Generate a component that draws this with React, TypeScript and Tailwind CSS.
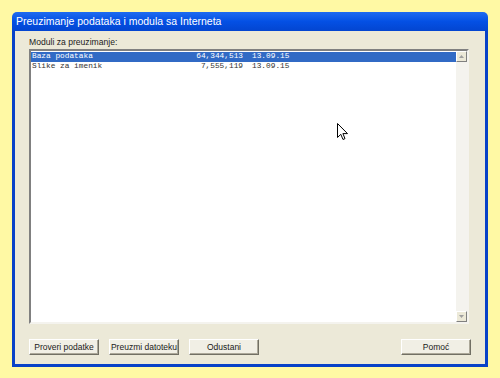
import React from "react";

const rows = [
  { name: "Baza podataka", size: "64,344,513", date: "13.09.15" },
  { name: "Slike za imenik", size: "7,555,119", date: "13.09.15" },
];

const buttons = ["Proveri podatke", "Preuzmi datoteku", "Odustani"];

function XpButton({ label }: { label: string }) {
  return (
    <button
      type="button"
      className="block h-[16px] w-[70px] whitespace-nowrap border border-t-white border-l-white border-b-[#716F64] border-r-[#716F64] bg-[#F1EFE5] p-0 text-[8.5px] leading-[14px] text-[#1a1a1a] shadow-[inset_-1px_-1px_0_#ACA899]"
    >
      {label}
    </button>
  );
}

function ScrollArrow({ up }: { up?: boolean }) {
  return (
    <div className="flex h-[11px] w-[11px] items-center justify-center border border-t-white border-l-white border-b-[#808080] border-r-[#808080] bg-[#ECE9D8]">
      <svg width="5" height="3" viewBox="0 0 5 3">
        <path d={up ? "M0 3 L2.5 0 L5 3 Z" : "M0 0 L2.5 3 L5 0 Z"} fill="#A0A0A0" />
      </svg>
    </div>
  );
}

export default function App() {
  return (
    <div
      className="h-[378px] w-[500px] bg-[#FFF9A4] pl-[12px] pt-[12px]"
      style={{ fontFamily: '"Liberation Sans", Arial, sans-serif' }}
    >
      <div className="flex h-[355px] w-[476px] flex-col">
        <div className="flex h-[19px] items-center rounded-t-[5px] bg-gradient-to-b from-[#1E6BF0] via-[#0450E4] to-[#0345D0] pl-[4px] text-[10.5px] text-white">
          Preuzimanje podataka i modula sa Interneta
        </div>
        <div className="flex flex-1 flex-col border-x-[3px] border-b-[3px] border-[#0842C8] bg-[#ECE9D8] px-[14px] pt-[6px]">
          <div className="text-[8.6px] leading-[11px] text-[#222]">
            Moduli za preuzimanje:
          </div>
          <div className="relative mr-[2px] mt-[1px] flex h-[275px] border-2 border-t-[#808080] border-l-[#808080] border-b-[#F4F3EE] border-r-[#F4F3EE] bg-white">
            <div className="flex-1 pt-[1px]">
              {rows.map((row, i) => (
                <div
                  key={row.name}
                  className={`flex h-[10px] items-center pl-[1px] text-[7.8px] ${
                    i === 0 ? "bg-[#316AC5] text-white" : "text-[#333]"
                  }`}
                  style={{ fontFamily: '"Liberation Mono", "Courier New", monospace' }}
                >
                  <span className="w-[150px]">{row.name}</span>
                  <span className="w-[61px] text-right">{row.size}</span>
                  <span className="ml-[9px]">{row.date}</span>
                </div>
              ))}
            </div>
            <div className="flex w-[11px] flex-col justify-between bg-[#F4F3EE]">
              <ScrollArrow up />
              <ScrollArrow />
            </div>
            <svg
              className="absolute left-[306px] top-[72px]"
              width="12"
              height="19"
              viewBox="0 0 12 19"
            >
              <path
                d="M0.5 0.5 L0.5 14.5 L3.8 11.3 L6 16.5 L8 15.6 L5.9 10.6 L10.5 10.6 Z"
                fill="white"
                stroke="black"
                strokeWidth="1"
              />
            </svg>
          </div>
          <div className="mt-[15px] flex h-[16px] items-start">
            <div className="flex gap-[10px]">
              {buttons.map((b) => (
                <XpButton key={b} label={b} />
              ))}
            </div>
            <div className="ml-auto flex">
              <XpButton label="Pomoć" />
            </div>
          </div>
        </div>
      </div>
    </div>
  );
}
